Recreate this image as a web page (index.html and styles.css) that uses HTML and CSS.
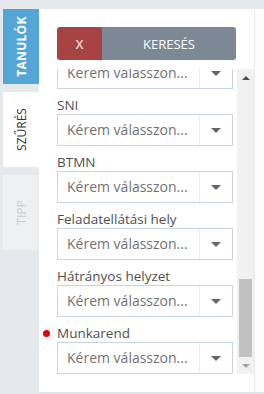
FILE: index.html
```html
<!DOCTYPE html>
<html lang="hu">
<head>
<meta charset="utf-8">
<link rel="stylesheet" href="styles.css">
</head>
<body>
<div class="wrap">
  <div class="tabs">
    <div class="tab tab-blue"><span class="tab-text">TANULÓK</span></div>
    <div class="tab tab-active"><span class="tab-text">SZŰRÉS</span></div>
    <div class="tab tab-off"><span class="tab-text">TIPP</span></div>
  </div>
  <div class="panel">
    <div class="content">
      <div class="buttons">
        <div class="btn btn-x">X</div>
        <div class="btn btn-search">KERESÉS</div>
      </div>
      <div class="scroller">
        <div class="list">
          <div class="select first"><span class="ph">Kérem válasszon...</span><span class="caret-box"><span class="caret"></span></span></div>
          <div class="field"><div class="label">SNI</div><div class="select"><span class="ph">Kérem válasszon...</span><span class="caret-box"><span class="caret"></span></span></div></div>
          <div class="field"><div class="label">BTMN</div><div class="select"><span class="ph">Kérem válasszon...</span><span class="caret-box"><span class="caret"></span></span></div></div>
          <div class="field"><div class="label">Feladatellátási hely</div><div class="select"><span class="ph">Kérem válasszon...</span><span class="caret-box"><span class="caret"></span></span></div></div>
          <div class="field"><div class="label">Hátrányos helyzet</div><div class="select"><span class="ph">Kérem válasszon...</span><span class="caret-box"><span class="caret"></span></span></div></div>
          <div class="field"><div class="label req">Munkarend</div><div class="select"><span class="ph">Kérem válasszon...</span><span class="caret-box"><span class="caret"></span></span></div></div>
        </div>
        <div class="sbar">
          <div class="sbtn"><span class="arr-up"></span></div>
          <div class="strack"><div class="sthumb"></div></div>
          <div class="sbtn"><span class="arr-down"></span></div>
        </div>
      </div>
    </div>
    <div class="edge"></div>
  </div>
</div>
</body>
</html>
```
FILE: styles.css
```css
html, body {
  margin: 0;
  padding: 0;
}
body {
  background: #e6e9ec;
  font-family: "Open Sans", "Liberation Sans", sans-serif;
  width: 264px;
  height: 394px;
  overflow: hidden;
}
.wrap {
  display: flex;
  padding-top: 9px;
}
.tabs {
  width: 36px;
  padding-left: 3px;
  display: flex;
  flex-direction: column;
  gap: 8px;
}
.tab {
  height: 75px;
  display: flex;
  align-items: center;
  justify-content: center;
}
.tab-text {
  display: block;
  transform: rotate(-90deg);
  white-space: nowrap;
  font-size: 12px;
}
.tab-blue {
  background: #55a6d6;
  color: #fff;
}
.tab-blue .tab-text {
  font-weight: 700;
  letter-spacing: 0.3px;
}
.tab-active {
  background: #fff;
  color: #333;
}
.tab-off {
  background: #eef0f2;
  color: #c9cdd1;
}
.panel {
  flex: 1;
  display: flex;
  height: 383px;
  background: #fff;
  border-bottom: 1px solid #e1e4e7;
}
.content {
  width: 215px;
  border-right: 1px solid #ebebeb;
  display: flex;
  flex-direction: column;
}
.edge {
  flex: 1;
  background: #fdfdfd;
}
.buttons {
  display: flex;
  margin: 18px 0 0 18px;
  width: 179px;
  height: 33px;
}
.btn {
  display: flex;
  align-items: center;
  justify-content: center;
  color: #fff;
  font-size: 13px;
}
.btn-x {
  width: 45px;
  background: #a84343;
  border-radius: 3px 0 0 3px;
}
.btn-search {
  flex: 1;
  background: #7c8895;
  border-radius: 0 3px 3px 0;
}
.scroller {
  display: flex;
  margin-top: 9px;
  height: 305px;
}
.list {
  width: 176px;
  padding-left: 18px;
  overflow: hidden;
}
.select {
  box-sizing: border-box;
  height: 32px;
  border: 1px solid #c6d4e4;
  display: flex;
  align-items: center;
  background: #fff;
}
.first {
  margin-top: -12px;
}
.ph {
  flex: 1;
  padding-left: 9px;
  font-size: 14px;
  line-height: 16px;
  color: #727272;
  white-space: nowrap;
}
.caret-box {
  width: 32px;
  flex: none;
  height: 100%;
  border-left: 1px solid #ececec;
  display: flex;
  align-items: center;
  justify-content: center;
}
.caret {
  width: 0;
  height: 0;
  border-left: 5px solid transparent;
  border-right: 5px solid transparent;
  border-top: 5px solid #666;
}
.field {
  margin-top: 8px;
}
.label {
  height: 17px;
  line-height: 17px;
  font-size: 13.5px;
  color: #505050;
  position: relative;
  white-space: nowrap;
}
.req::before {
  content: "";
  position: absolute;
  left: -14px;
  top: 5px;
  width: 7px;
  height: 7px;
  border-radius: 50%;
  background: #e3000f;
}
.sbar {
  width: 17px;
  margin-left: 4px;
  background: #f1f1f1;
  display: flex;
  flex-direction: column;
}
.sbtn {
  height: 17px;
  display: flex;
  align-items: center;
  justify-content: center;
}
.arr-up {
  width: 0;
  height: 0;
  border-left: 4px solid transparent;
  border-right: 4px solid transparent;
  border-bottom: 4px solid #505050;
}
.arr-down {
  width: 0;
  height: 0;
  border-left: 4px solid transparent;
  border-right: 4px solid transparent;
  border-top: 4px solid #a3a3a3;
}
.strack {
  flex: 1;
  display: flex;
  flex-direction: column;
  justify-content: flex-end;
}
.sthumb {
  height: 78px;
  margin: 0 2px;
  background: #c1c1c1;
}
```
